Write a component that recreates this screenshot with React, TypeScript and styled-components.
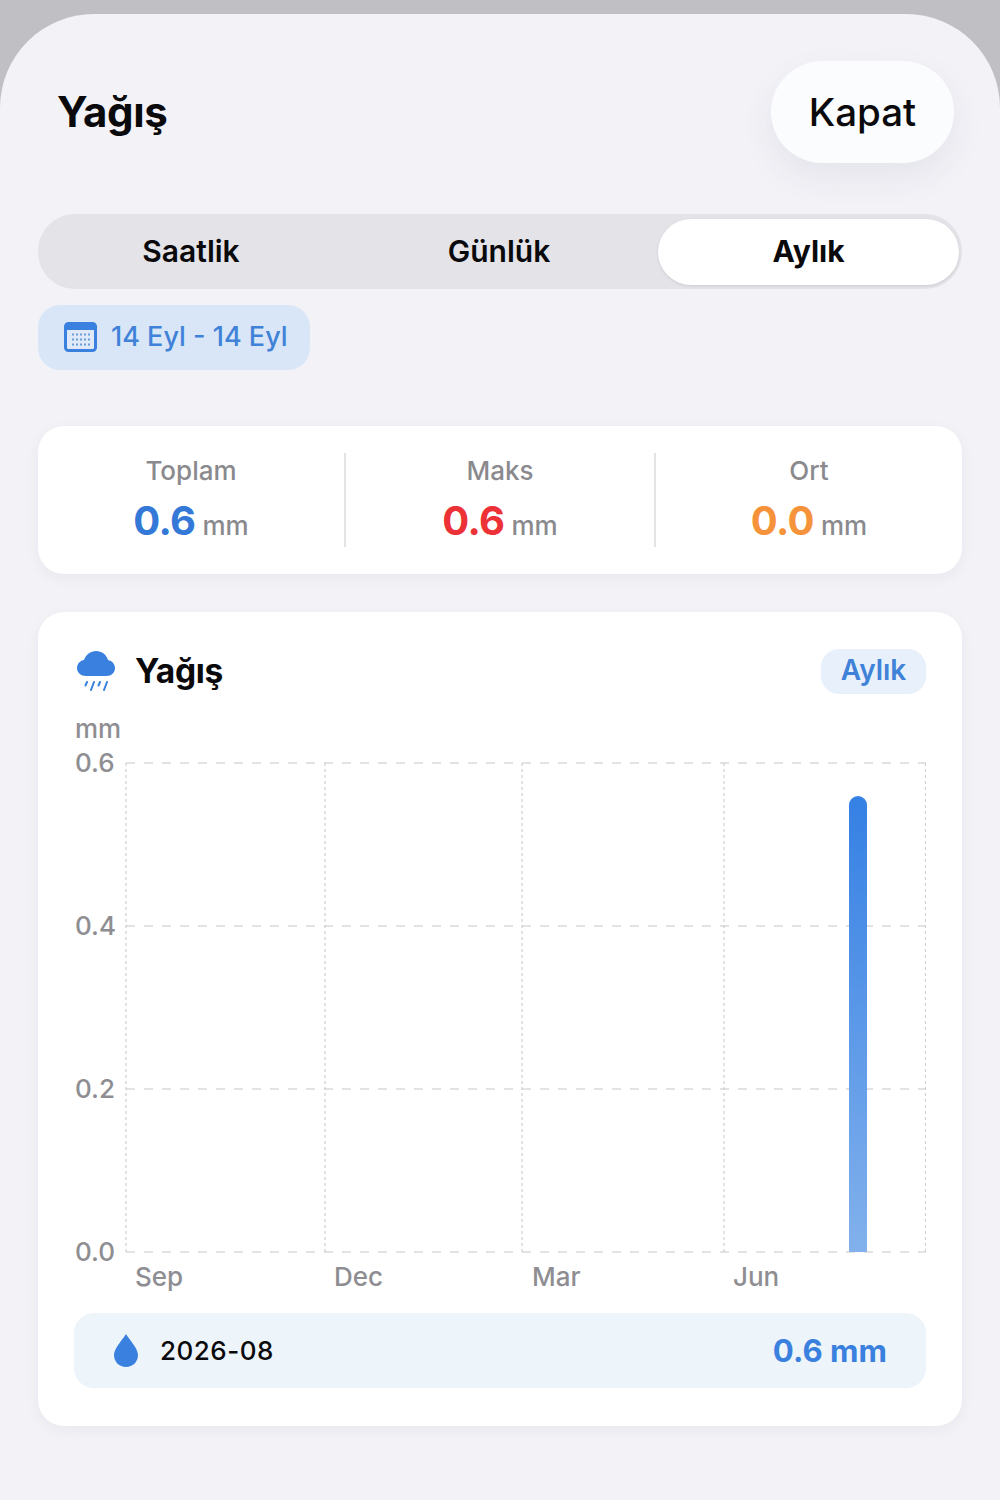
import React from "react";
import styled, { createGlobalStyle } from "styled-components";

const Global = createGlobalStyle`
  html, body { margin: 0; padding: 0; background: #bfbfc4; }
  * { box-sizing: border-box; }
  body { font-family: Inter, "Liberation Sans", sans-serif; -webkit-font-smoothing: antialiased; }
`;

const Sheet = styled.div`
  margin-top: 14px;
  height: 1486px;
  padding: 47px 38px 0;
  background: #f2f2f7;
  border-radius: 94px 94px 0 0;
  overflow: hidden;
`;
const Header = styled.header`
  display: flex;
  align-items: center;
  justify-content: space-between;
  padding: 0 8px 0 19px;
`;
const Title = styled.h1`
  margin: 0;
  font-size: 42px;
  line-height: 48px;
  font-weight: 700;
  letter-spacing: -0.4px;
  color: #0a0a0c;
`;
const CloseButton = styled.button`
  width: 183px;
  height: 102px;
  border: none;
  border-radius: 51px;
  background: #fbfcfd;
  box-shadow: 0 14px 34px rgba(60, 60, 80, 0.07);
  font-family: inherit;
  font-size: 38.5px;
  font-weight: 500;
  color: #0a0a0c;
`;
const Segments = styled.div`
  margin-top: 51px;
  height: 75px;
  padding: 5px 3px 4px 0;
  display: grid;
  grid-template-columns: 306px 310px 1fr;
  background: #e3e3e8;
  border-radius: 37px;
`;
const Segment = styled.div<{ $active?: boolean }>`
  display: flex;
  align-items: center;
  justify-content: center;
  padding-bottom: 2px;
  margin-left: ${(p) => (p.$active ? "4px" : "0")};
  font-size: 30px;
  font-weight: ${(p) => (p.$active ? 700 : 600)};
  color: #0a0a0c;
  border-radius: 33px;
  background: ${(p) => (p.$active ? "#ffffff" : "transparent")};
  box-shadow: ${(p) => (p.$active ? "0 1px 3px rgba(0,0,0,.1)" : "none")};
`;
const DateChip = styled.div`
  margin-top: 16px;
  width: 272px;
  height: 65px;
  padding: 0 0 2px 26px;
  display: flex;
  align-items: center;
  gap: 14px;
  background: #d9e6f7;
  border-radius: 22px;
  font-size: 27px;
  font-weight: 500;
  color: #3f82d8;
`;
const Card = styled.section`
  background: #ffffff;
  border-radius: 26px;
  box-shadow: 0 4px 14px rgba(40, 40, 60, 0.05);
`;
const StatsCard = styled(Card)`
  margin-top: 56px;
  height: 148px;
  display: grid;
  grid-template-columns: 308px 310px 1fr;
  align-items: center;
`;
const Stat = styled.div<{ $divider?: boolean }>`
  height: 94px;
  display: flex;
  flex-direction: column;
  align-items: center;
  justify-content: space-between;
  border-right: ${(p) => (p.$divider ? "2px solid #e3e3e6" : "none")};
`;
const StatLabel = styled.div`
  font-size: 26px;
  line-height: 36px;
  font-weight: 500;
  color: #8a8a8e;
`;
const StatValue = styled.div<{ $color: string }>`
  display: flex;
  align-items: baseline;
  gap: 7px;
  font-size: 40px;
  line-height: 46px;
  margin-bottom: -2px;
  font-weight: 700;
  letter-spacing: -0.6px;
  color: ${(p) => p.$color};
`;
const StatUnit = styled.span`
  font-size: 26px;
  font-weight: 500;
  letter-spacing: 0;
  color: #8a8a8e;
`;
const ChartCard = styled(Card)`
  margin-top: 38px;
  height: 814px;
  padding: 36px 36px 0;
`;
const ChartHeader = styled.div`
  display: flex;
  align-items: center;
  height: 46px;
  padding-left: 3px;
`;
const ChartTitle = styled.h2`
  margin: 0 0 0 20px;
  flex: 1;
  font-size: 33.5px;
  font-weight: 700;
  letter-spacing: -0.3px;
  color: #0a0a0c;
`;
const Badge = styled.div`
  width: 105px;
  height: 45px;
  padding-bottom: 2px;
  display: flex;
  align-items: center;
  justify-content: center;
  background: #e8f1fb;
  border-radius: 18px;
  font-size: 28px;
  font-weight: 600;
  color: #3f82d8;
`;
const ChartSvg = styled.svg`
  display: block;
  margin-top: 14px;
`;
const AxisText = styled.text`
  font-family: Inter, "Liberation Sans", sans-serif;
  font-size: 26px;
  font-weight: 500;
  fill: #8e8e92;
`;
const DetailRow = styled.div`
  margin-top: 20px;
  height: 75px;
  padding: 0 39px 0 40px;
  display: flex;
  align-items: center;
  background: #edf4fa;
  border-radius: 20px;
`;
const DetailDate = styled.div`
  margin-left: 22px;
  flex: 1;
  font-size: 26px;
  font-weight: 500;
  letter-spacing: 0.5px;
  color: #0a0a0c;
`;
const DetailValue = styled.div`
  font-size: 31.2px;
  font-weight: 700;
  color: #3a80de;
`;

const CalendarIcon = () => (
  <svg width="33" height="30" viewBox="0 0 33 30">
    <rect x="1.5" y="1.5" width="30" height="27" rx="3" fill="#dfe9f7" stroke="#3a80de" strokeWidth="3" />
    <path d="M1.5 4.5a3 3 0 0 1 3-3h24a3 3 0 0 1 3 3V8h-30z" fill="#3a80de" />
    <g fill="#6a9cdc">
      {[12.5, 17.5, 22.5].flatMap((y) =>
        [9, 13, 17, 21, 25].map((x) => <rect key={`${x}-${y}`} x={x - 1} y={y - 1} width="2" height="2" />)
      )}
    </g>
  </svg>
);

const RainIcon = () => (
  <svg width="38" height="40" viewBox="0 0 38 40">
    <path
      d="M9 25C4 25 0 21.500 0 17c0-4 3-7.500 7-8C9 3.500 13.500 0 19 0c6 0 10.500 3.800 12 9 4 .8 7 4 7 8 0 4.500-3.500 8-8.500 8z"
      fill="#3a80de"
    />
    <g stroke="#3a80de" strokeWidth="2" strokeLinecap="round">
      <path d="M10 31l-1.500 3.500M17 31l-3 8M23 31l-1.500 3.500M30 31l-3 8" />
    </g>
  </svg>
);

const DropIcon = () => (
  <svg width="24" height="33" viewBox="0 0 24 33">
    <path d="M12 0C14 4 24 14 24 21c0 7-5.300 12-12 12S0 28 0 21C0 14 10 4 12 0z" fill="#3a80de" />
  </svg>
);

const yTicks = [
  { label: "0.6", y: 47 },
  { label: "0.4", y: 210 },
  { label: "0.2", y: 373 },
  { label: "0.0", y: 536 },
];
const xTicks = [
  { label: "Sep", grid: 52, text: 61 },
  { label: "Dec", grid: 251, text: 260 },
  { label: "Mar", grid: 448, text: 458 },
  { label: "Jun", grid: 650, text: 659 },
];

const Chart = () => (
  <ChartSvg width="852" height="585" viewBox="0 -8 852 585">
    <defs>
      <linearGradient id="bar" x1="0" y1="0" x2="0" y2="1">
        <stop offset="0" stopColor="#3580e4" />
        <stop offset="1" stopColor="#82b1ec" />
      </linearGradient>
    </defs>
    <AxisText x="1" y="22">mm</AxisText>
    {xTicks.map((t) => (
      <line key={t.label} x1={t.grid} x2={t.grid} y1="47" y2="536" stroke="#d0d0d4" strokeWidth="1.2" strokeDasharray="3 3" />
    ))}
    <line x1="851.5" x2="851.5" y1="47" y2="536" stroke="#d0d0d4" strokeWidth="1.2" strokeDasharray="3 3" />
    {yTicks.map((t) => (
      <g key={t.label}>
        <line x1="52" x2="852" y1={t.y} y2={t.y} stroke="#c8c8cc" strokeWidth="1.2" strokeDasharray="9 9" />
        <AxisText x="1" y={t.y + 9}>{t.label}</AxisText>
      </g>
    ))}
    <path d="M775 536V89a9 9 0 0 1 18 0V536z" fill="url(#bar)" />
    {xTicks.map((t) => (
      <AxisText key={t.label} x={t.text} y="570">{t.label}</AxisText>
    ))}
  </ChartSvg>
);

const stats = [
  { label: "Toplam", value: "0.6", color: "#3478d8" },
  { label: "Maks", value: "0.6", color: "#ec3237" },
  { label: "Ort", value: "0.0", color: "#f5923a" },
];

export default function App() {
  return (
    <>
      <Global />
      <Sheet>
        <Header>
          <Title>Yağış</Title>
          <CloseButton>Kapat</CloseButton>
        </Header>
        <Segments>
          <Segment>Saatlik</Segment>
          <Segment>Günlük</Segment>
          <Segment $active>Aylık</Segment>
        </Segments>
        <DateChip>
          <CalendarIcon />
          14 Eyl - 14 Eyl
        </DateChip>
        <StatsCard>
          {stats.map((s, i) => (
            <Stat key={s.label} $divider={i < 2}>
              <StatLabel>{s.label}</StatLabel>
              <StatValue $color={s.color}>
                {s.value}
                <StatUnit>mm</StatUnit>
              </StatValue>
            </Stat>
          ))}
        </StatsCard>
        <ChartCard>
          <ChartHeader>
            <RainIcon />
            <ChartTitle>Yağış</ChartTitle>
            <Badge>Aylık</Badge>
          </ChartHeader>
          <Chart />
          <DetailRow>
            <DropIcon />
            <DetailDate>2026-08</DetailDate>
            <DetailValue>0.6 mm</DetailValue>
          </DetailRow>
        </ChartCard>
      </Sheet>
    </>
  );
}
